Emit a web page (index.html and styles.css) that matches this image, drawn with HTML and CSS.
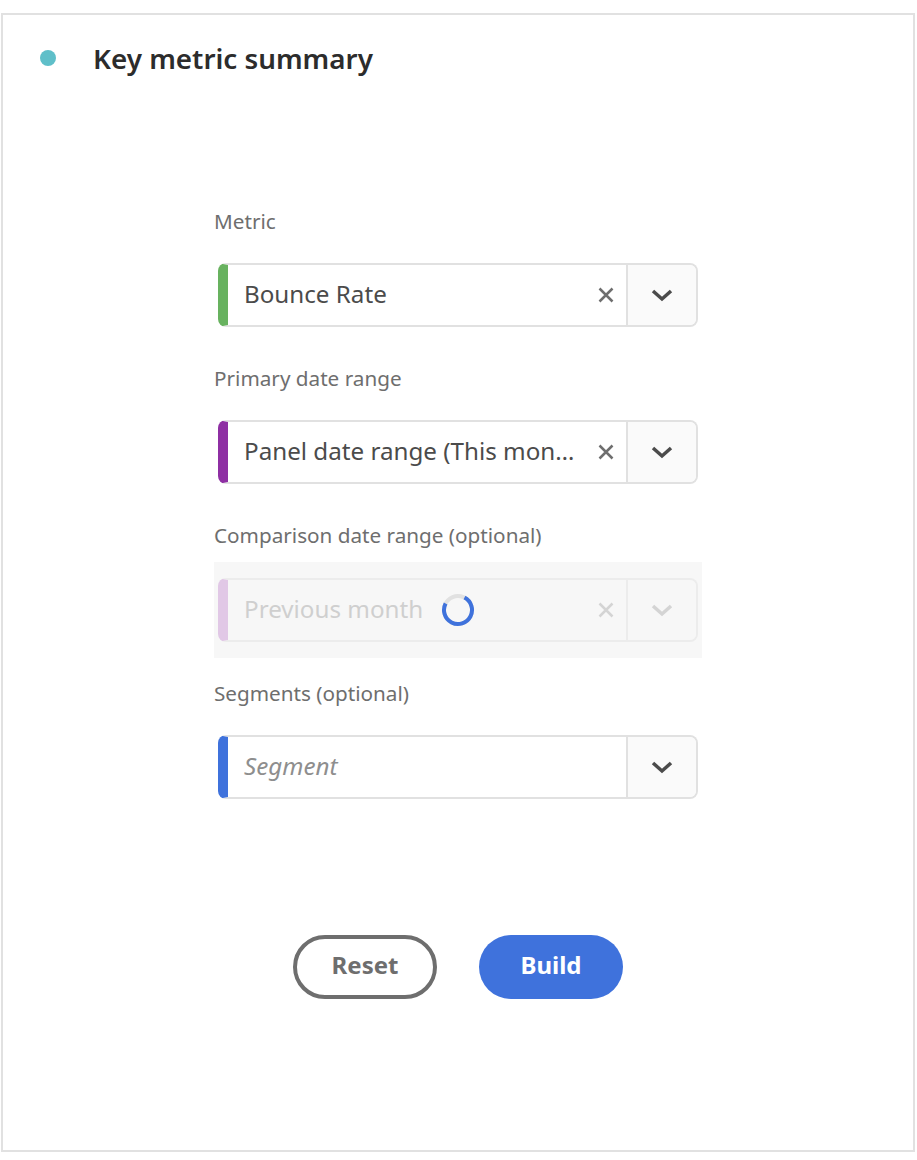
FILE: index.html
```html
<!DOCTYPE html>
<html lang="en">
<head>
<meta charset="UTF-8" />
<meta name="viewport" content="width=device-width, initial-scale=1" />
<title>Key metric summary</title>
<link rel="stylesheet" href="styles.css">
</head>
<body>

<div class="panel">
  <div class="panel-head">
    <span class="dot"></span>
    <h1>Key metric summary</h1>
  </div>

  <form class="form">
    <div class="field">
      <label>Metric</label>
      <div class="wrap">
        <div class="combo combo-green">
          <span class="value">Bounce Rate</span>
          <svg class="clear" viewBox="0 0 16 16"><path d="M1.5 1.5L14.5 14.5M14.5 1.5L1.5 14.5" /></svg>
          <span class="toggle"><svg viewBox="0 0 22 14"><path d="M2 3L11 11L20 3" /></svg></span>
        </div>
      </div>
    </div>

    <div class="field">
      <label>Primary date range</label>
      <div class="wrap">
        <div class="combo combo-purple">
          <span class="value">Panel date range (This mon…</span>
          <svg class="clear" viewBox="0 0 16 16"><path d="M1.5 1.5L14.5 14.5M14.5 1.5L1.5 14.5" /></svg>
          <span class="toggle"><svg viewBox="0 0 22 14"><path d="M2 3L11 11L20 3" /></svg></span>
        </div>
      </div>
    </div>

    <div class="field field-loading">
      <label>Comparison date range (optional)</label>
      <div class="wrap wrap-loading">
        <div class="combo combo-purple combo-disabled">
          <span class="value value-short">Previous month</span>
          <svg class="spinner" viewBox="0 0 34 34">
            <circle class="spinner-track" cx="17" cy="17" r="14" />
            <path class="spinner-arc" d="M23.5 4.6A14 14 0 1 1 4.6 10.5" />
          </svg>
          <span class="grow"></span>
          <svg class="clear" viewBox="0 0 16 16"><path d="M1.5 1.5L14.5 14.5M14.5 1.5L1.5 14.5" /></svg>
          <span class="toggle"><svg viewBox="0 0 22 14"><path d="M2 3L11 11L20 3" /></svg></span>
        </div>
      </div>
    </div>

    <div class="field">
      <label>Segments (optional)</label>
      <div class="wrap">
        <div class="combo combo-blue">
          <span class="value placeholder">Segment</span>
          <span class="toggle"><svg viewBox="0 0 22 14"><path d="M2 3L11 11L20 3" /></svg></span>
        </div>
      </div>
    </div>

    <div class="actions">
      <button type="button" class="btn btn-reset">Reset</button>
      <button type="button" class="btn btn-build">Build</button>
    </div>
  </form>
</div>

</body>
</html>
```

FILE: styles.css
```css
* { box-sizing: border-box; }
body {
  margin: 0;
  padding: 13px 2px 0 1px;
  background: #fff;
  font-family: "Noto Sans", Arial, sans-serif;
}
.panel {
  height: 1139px;
  border: 2px solid #e1e1e1;
  background: #fff;
}
.panel-head {
  display: flex;
  align-items: center;
  height: 86px;
  padding-left: 37px;
}
.dot {
  width: 16px;
  height: 16px;
  border-radius: 50%;
  background: #5fbfc9;
  margin-right: 37px;
}
h1 {
  margin: 0;
  font-size: 27.8px;
  font-weight: 600;
  color: #2c2c2c;
}
.form {
  width: 488px;
  margin: 0 0 0 211px;
  padding-top: 103px;
}
.field label {
  display: block;
  height: 61px;
  padding-top: 21px;
  font-size: 20.7px;
  line-height: 28px;
  color: #6e6e6e;
}
.field:first-child label {
  height: 43px;
  padding-top: 3px;
}
.field-loading label {
  height: 62px;
}
.wrap {
  height: 96px;
  padding: 16px 4px 0;
}
.wrap-loading {
  background: #f7f7f7;
}
.combo {
  display: flex;
  align-items: center;
  height: 64px;
  border: 2px solid #e1e1e1;
  border-left: 10px solid;
  border-radius: 8px;
  background: #fff;
}
.combo-green { border-left-color: #68b25f; }
.combo-purple { border-left-color: #8e2fa3; }
.combo-blue { border-left-color: #3f72dc; }
.value {
  flex: 1;
  min-width: 0;
  padding-left: 16px;
  padding-bottom: 4px;
  font-size: 24.2px;
  color: #4b4b4b;
  white-space: nowrap;
}
.value-short { flex: none; }
.grow { flex: 1; }
.placeholder {
  font-style: italic;
  color: #8e8e8e;
}
.clear {
  flex: none;
  width: 16px;
  height: 16px;
  margin: 0 12px 0 18px;
  fill: none;
  stroke: #6e6e6e;
  stroke-width: 2.5;
}
.toggle {
  flex: none;
  display: flex;
  align-items: center;
  justify-content: center;
  width: 70px;
  height: 100%;
  padding-bottom: 1px;
  border-left: 2px solid #e1e1e1;
  border-radius: 0 6px 6px 0;
  background: #fafafa;
}
.toggle svg {
  width: 22px;
  height: 14px;
  fill: none;
  stroke: #4b4b4b;
  stroke-width: 3.5;
}
.combo-disabled {
  border-color: #ececec;
  border-left-color: #e1c8e6;
  background: #f7f7f7;
}
.combo-disabled .value { color: #cfcfcf; }
.combo-disabled .clear { stroke: #d4d4d4; }
.combo-disabled .toggle { background: #f7f7f7; border-left-color: #ececec; }
.combo-disabled .toggle svg { stroke: #d4d4d4; }
.spinner {
  flex: none;
  width: 34px;
  height: 34px;
  margin-left: 18px;
  fill: none;
  stroke-width: 4;
}
.spinner-track { stroke: #e1e1e1; }
.spinner-arc { stroke: #3f72dc; }
.actions {
  display: flex;
  justify-content: center;
  gap: 42px;
  padding-top: 120px;
}
.btn {
  width: 144px;
  height: 64px;
  padding: 0 0 5px;
  border-radius: 32px;
  font-family: inherit;
  font-size: 24px;
  font-weight: 700;
  cursor: pointer;
}
.btn-reset {
  border: 4px solid #6e6e6e;
  background: #fff;
  color: #6e6e6e;
}
.btn-build {
  border: none;
  background: #3f72dc;
  color: #fff;
}
```
